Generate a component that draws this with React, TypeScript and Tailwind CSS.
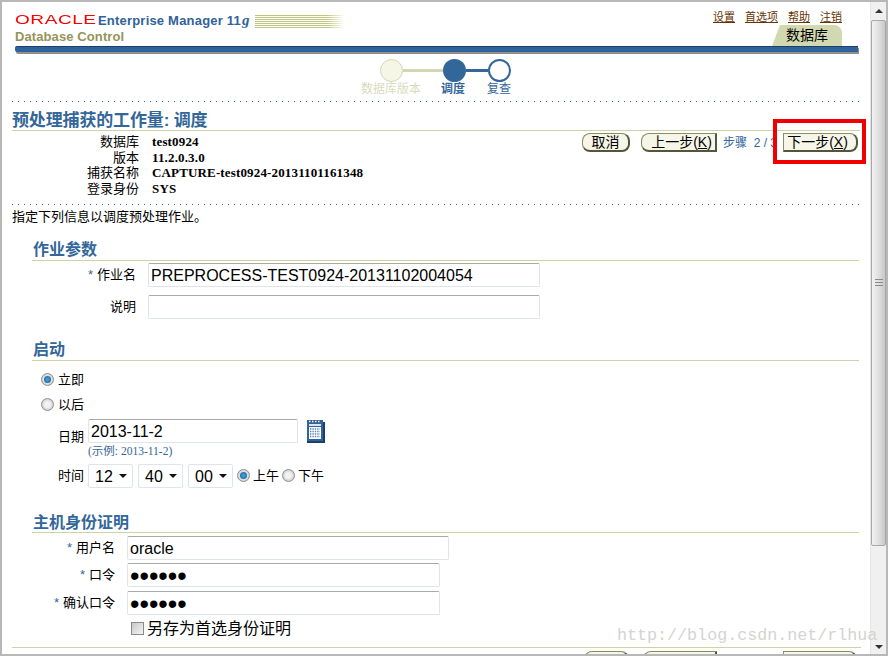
const SANS = 'font-["Liberation_Sans","Noto_Sans_CJK_SC",sans-serif]';

const BLUE = 'text-[#336699]';
const DOTTED = 'h-px bg-[repeating-linear-gradient(to_right,#336699_0,#336699_1px,transparent_1px,transparent_6px)]';

function Radio({ checked }: { checked?: boolean }) {
  return (
    <span className="flex h-[13px] w-[13px] shrink-0 items-center justify-center rounded-full border border-[#8f8f8f] bg-[radial-gradient(circle,#f2f2f2_35%,#b4b4b4_100%)]">
      {checked && <span className="h-[7px] w-[7px] rounded-full bg-[radial-gradient(circle,#3f9bd6_20%,#0f4f86_100%)]" />}
    </span>
  );
}

function Field({ value, type = 'text', className = '' }: { value: string; type?: string; className?: string }) {
  const size = type === 'password' ? 'text-[27px]' : 'text-[16px]';
  return (
    <input
      readOnly
      type={type}
      defaultValue={value}
      className={`h-[24px] rounded-[2px] border border-[#dfe3ea] border-t-[#a9a9a9] bg-white px-[2px] pt-[2px] text-black outline-none ${size} ${className}`}
    />
  );
}

function TimeSelect({ value, className = '' }: { value: string; className?: string }) {
  return (
    <div className={`relative h-[24px] w-[45px] ${className}`}>
      <select
        defaultValue={value}
        className="h-full w-full appearance-none rounded-[2px] border border-[#dfe3ea] bg-white pl-[6px] text-[16px] text-black outline-none"
      >
        <option value={value}>{value}</option>
      </select>
      <svg className="absolute right-[6px] top-[10px]" width="8" height="4" viewBox="0 0 8 4">
        <path d="M0 0h8L4 4z" fill="#111" />
      </svg>
    </div>
  );
}

function NavButton({ children, className = '' }: { children?: React.ReactNode; className?: string }) {
  return (
    <button
      type="button"
      className={`h-[19px] border border-[#8c8c66] border-b-2 border-r-2 border-b-[#55553a] border-r-[#55553a] bg-[#f6f6e8] text-[14px] leading-[16px] text-black ${className}`}
    >
      {children}
    </button>
  );
}

function SectionTitle({ children, className = '' }: { children: React.ReactNode; className?: string }) {
  return (
    <div className={`ml-[30px] mr-[11px] border-b border-[#ccd3a8] pl-[1px] text-[16px] font-bold leading-[18px] ${BLUE} ${className}`}>
      {children}
    </div>
  );
}

function Required() {
  return <span className={`mr-[4px] ${BLUE}`}>*</span>;
}

function CalendarIcon() {
  return (
    <svg width="18" height="23" viewBox="0 0 18 23">
      <rect x="0" y="0" width="16" height="21" fill="#2f6399" />
      <rect x="16" y="2" width="2" height="21" fill="#1c3f68" />
      <rect x="0" y="21" width="18" height="2" fill="#1c3f68" />
      <path d="M2 1.5h1.5M5 1.5h1.5M8 1.5h1.5M11 1.5h1.5" stroke="#fff" strokeWidth="1.5" />
      <rect x="2" y="4" width="12" height="2" fill="#dfe8f2" />
      <rect x="2" y="7" width="12" height="12" fill="#fff" />
      <path d="M3 9h10M3 11.5h10M3 14h10M3 16.5h10" stroke="#5b84b1" strokeWidth="1.4" strokeDasharray="1.4 1" />
    </svg>
  );
}

export default function App() {
  const infoValue = "font-['Liberation_Serif'] text-[13px] tracking-[0.15px]";
  return (
    <div className={`relative flex h-[656px] w-[888px] overflow-hidden border-2 border-[#b8b8b8] bg-white ${SANS} text-[13px] text-black`}>
      <div className="w-[868px] shrink-0">
        {/* branding */}
        <div className="flex h-[44px] justify-between pl-[13px] pr-[28px]">
          <div className="pt-[10px]">
            <div className="flex h-[16px] items-center">
              <span className="w-[81px] origin-left scale-x-[1.46] text-[13px] leading-[16px] tracking-[0.4px] text-[#f80000]">ORACLE</span>
              <span className="ml-[2px] text-[13px] font-bold leading-[16px] tracking-[0.2px] text-[#2f6399]">
                Enterprise Manager 11<i className="ml-[1px] font-['Liberation_Serif'] text-[15px]">g</i>
              </span>
              <span className="ml-[5px] mt-[3px] h-[14px] w-[90px] bg-[repeating-linear-gradient(to_bottom,#c2c67c_0,#c2c67c_1px,#ffffff_1px,#ffffff_2px)] [mask-image:linear-gradient(to_right,#000_80%,transparent)]" />
            </div>
            <div className="mt-[1px] text-[13px] font-bold leading-[16px] tracking-[0.1px] text-[#94945a]">Database Control</div>
          </div>
          <div className="flex flex-col items-end pt-[8px]">
            <div className="flex gap-[10px] text-[11px] leading-[14px] text-[#663300] underline">
              <a>设置</a>
              <a>首选项</a>
              <a>帮助</a>
              <a>注销</a>
            </div>
            <div className="mt-[1px] flex h-[21px] w-[70px] items-center justify-center rounded-tr-[8px] bg-[#d2d8b0] text-[14px] [clip-path:polygon(8px_0,100%_0,100%_100%,0_100%)]">
              数据库
            </div>
          </div>
        </div>
        <div className="ml-[13px] mr-[12px] h-[6px] rounded-l-[2px] border-t border-[#1a3f6b] bg-[#2f6399] shadow-[1px_2px_0_#8f8f8f]" />

        {/* train */}
        <div className="mt-[7px] flex h-[23px] items-center pl-[378px]">
          <span className="h-[23px] w-[23px] shrink-0 rounded-full border border-[#d2d8b0] bg-[#f5f6e6]" />
          <span className="h-[3px] w-[40px] bg-[#d2d8b0]" />
          <span className="h-[23px] w-[23px] shrink-0 rounded-full bg-[#336699]" />
          <span className="h-[3px] w-[22px] bg-[#336699]" />
          <span className="h-[23px] w-[23px] shrink-0 rounded-full border-2 border-[#336699] bg-white" />
        </div>
        <div className="-mt-px flex h-[16px] pl-[359px] text-[12px] leading-[16px]">
          <span className="w-[80px] text-[#d8dcbc]">数据库版本</span>
          <span className={`w-[46px] font-bold ${BLUE}`}>调度</span>
          <span className={BLUE}>复查</span>
        </div>
        <div className={`mx-[10px] mt-[4px] ${DOTTED}`} />

        {/* page title */}
        <div className={`mx-[10px] mt-[8px] h-[21px] border-b border-[#ccd3a8] text-[17px] font-bold leading-[22px] tracking-[-0.15px] ${BLUE}`}>
          预处理捕获的工作量: 调度
        </div>
        <div className="ml-[10px] mr-[12px] mt-[2px] flex justify-between">
          <div className="grid grid-cols-[127px_1fr] gap-x-[13px] pt-[1px] leading-[15.7px]">
            <span className="text-right">数据库</span>
            <b className={infoValue}>test0924</b>
            <span className="text-right">版本</span>
            <b className={infoValue}>11.2.0.3.0</b>
            <span className="text-right">捕获名称</span>
            <b className={infoValue}>CAPTURE-test0924-20131101161348</b>
            <span className="text-right">登录身份</span>
            <b className={infoValue}>SYS</b>
          </div>
          <div className="flex h-[19px] items-center">
            <NavButton className="w-[48px] rounded-[8px]">取消</NavButton>
            <NavButton className="ml-[11px] w-[76px] rounded-l-[8px] pl-[6px]">
              上一步(<u>K</u>)
            </NavButton>
            <span className={`ml-[6px] w-[60px] text-[12px] ${BLUE}`}>步骤&nbsp; 2 / 3</span>
            <NavButton className="w-[75px] rounded-r-[8px] pr-[5px]">
              下一步(<u>X</u>)
            </NavButton>
          </div>
        </div>
        <div className={`mx-[10px] mt-[7px] ${DOTTED}`} />
        <p className="ml-[10px] mt-[4px] leading-[16px]">指定下列信息以调度预处理作业。</p>

        {/* job parameters */}
        <SectionTitle className="mt-[16px] h-[20px]">作业参数</SectionTitle>
        <div className="mt-[2px] flex items-center">
          <span className="w-[134px] text-right">
            <Required />
            作业名
          </span>
          <Field value="PREPROCESS-TEST0924-20131102004054" className="ml-[12px] w-[392px]" />
        </div>
        <div className="mt-[8px] flex items-center">
          <span className="w-[134px] text-right">说明</span>
          <Field value="" className="ml-[12px] w-[392px]" />
        </div>

        {/* schedule */}
        <SectionTitle className="mt-[22px] h-[20px]">启动</SectionTitle>
        <div className="ml-[39px] mt-[10px] flex h-[18px] items-center gap-[4px]">
          <Radio checked />
          <span>立即</span>
        </div>
        <div className="ml-[39px] mt-[7px] flex h-[18px] items-center gap-[4px]">
          <Radio />
          <span>以后</span>
        </div>
        <div className="ml-[56px] mt-[5px] flex items-start">
          <span className="w-[30px] pt-[10px] leading-[16px]">日期</span>
          <div>
            <Field value="2013-11-2" className="w-[210px]" />
            <div className={`mt-[1px] font-['Liberation_Serif','Noto_Sans_CJK_SC'] text-[11.5px] leading-[14px] ${BLUE}`}>(示例: 2013-11-2)</div>
          </div>
          <span className="ml-[9px] mt-[1px]">
            <CalendarIcon />
          </span>
        </div>
        <div className="ml-[56px] mt-[6px] flex h-[24px] items-center">
          <span className="w-[30px]">时间</span>
          <TimeSelect value="12" />
          <TimeSelect value="40" className="ml-[5px]" />
          <TimeSelect value="00" className="ml-[5px]" />
          <span className="ml-[4px] flex items-center gap-[3px]">
            <Radio checked />
            <span>上午</span>
          </span>
          <span className="ml-[3px] flex items-center gap-[3px]">
            <Radio />
            <span>下午</span>
          </span>
        </div>

        {/* host credentials */}
        <SectionTitle className="mt-[25px] h-[20px] pt-[1px]">主机身份证明</SectionTitle>
        <div className="mt-[3px] flex items-center">
          <span className="w-[113px] text-right">
            <Required />
            用户名
          </span>
          <Field value="oracle" className="ml-[12px] w-[322px]" />
        </div>
        <div className="mt-[3px] flex items-center">
          <span className="w-[113px] text-right">
            <Required />
            口令
          </span>
          <Field value="oracle" type="password" className="ml-[12px] w-[313px]" />
        </div>
        <div className="mt-[4px] flex items-center">
          <span className="w-[113px] text-right">
            <Required />
            确认口令
          </span>
          <Field value="oracle" type="password" className="ml-[12px] w-[313px]" />
        </div>
        <div className="ml-[129px] mt-[3px] flex h-[22px] items-center gap-[3px] text-[16px]">
          <span className="h-[13px] w-[13px] shrink-0 border border-[#8a8a8a] bg-gradient-to-br from-[#c8c8c8] to-[#f4f4f4]" />
          <span>另存为首选身份证明</span>
        </div>
        <div className="ml-[10px] mr-[9px] mt-[7px] border-t border-[#ccd3a8]" />

        {/* bottom buttons, cut off by the window */}
        <div className="ml-[582px] mt-[3px] flex">
          <NavButton className="w-[45px] rounded-[8px]" />
          <NavButton className="ml-[14px] w-[74px] rounded-l-[8px]" />
          <NavButton className="ml-[66px] w-[74px] rounded-r-[8px]" />
        </div>
      </div>

      {/* scrollbar */}
      <div className="flex w-[16px] shrink-0 flex-col border-l border-[#e4e4e4] bg-[#f0f0f0]">
        <div className="flex h-[18px] shrink-0 items-center justify-center">
          <svg width="8" height="4" viewBox="0 0 8 4">
            <path d="M0 4h8L4 0z" fill="#333" />
          </svg>
        </div>
        <div className="relative h-[526px] shrink-0 rounded-[2px] border border-[#a8a8a8] bg-gradient-to-r from-[#f2f2f2] via-[#e0e0e0] to-[#c8c8c8]">
          <span className="absolute left-[3px] top-[258px] h-[7px] w-[8px] border-y border-[#8a8a8a] bg-[linear-gradient(to_bottom,transparent_2px,#8a8a8a_2px,#8a8a8a_3px,transparent_3px)]" />
        </div>
        <div className="mt-auto flex h-[14px] shrink-0 items-center justify-center">
          <svg width="8" height="4" viewBox="0 0 8 4">
            <path d="M0 0h8L4 4z" fill="#333" />
          </svg>
        </div>
      </div>

      {/* highlight drawn on top of the screenshot */}
      <div className="absolute left-[771px] top-[117px] h-[45px] w-[93px] border-4 border-[#f00000]" />
      {/* blog watermark */}
      <div className="absolute left-[615px] top-[624px] font-['Liberation_Mono'] text-[16.7px] leading-[20px] text-[#d4d4d0]">
        http://blog.csdn.net/rlhua
      </div>
    </div>
  );
}
